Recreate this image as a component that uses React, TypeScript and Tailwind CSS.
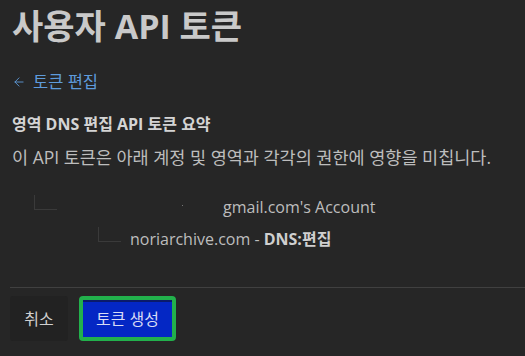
import { ArrowLeft } from "lucide-react";

const font = { fontFamily: '"Open Sans", "Noto Sans CJK KR", sans-serif' };

function TreeLine() {
  return <div className="h-[15px] w-[23px] shrink-0 border-b border-l border-[#3a3a3a]" />;
}

export default function App() {
  return (
    <div className="flex h-[356px] w-[525px] flex-col overflow-hidden bg-[#262626] text-[#c8c8c8]" style={font}>
      <div className="px-3 pt-[4px]">
        <h1 className="text-[34px] font-bold leading-[44px] text-[#c9c9c9]">사용자 API 토큰</h1>

        <a href="#" className="mt-[24px] flex items-center gap-[7px] text-[16.5px] leading-5 text-[#5e9bdc]">
          <ArrowLeft className="h-[14px] w-[14px]" strokeWidth={1.5} />
          토큰 편집
        </a>

        <h2 className="mt-[20px] text-[16px] font-bold leading-6 text-[#d4d4d4]">영역 DNS 편집 API 토큰 요약</h2>
        <p className="mt-[9px] text-[17.5px] leading-6 text-[#bdbdbd]">
          이 API 토큰은 아래 계정 및 영역과 각각의 권한에 영향을 미칩니다.
        </p>

        <div className="mt-[21px] flex flex-col">
          <div className="flex items-end pl-[22px]">
            <TreeLine />
            <span className="ml-[125px] mb-[4px] h-px w-px bg-[#777]" />
            <span className="ml-[40px] translate-y-[7px] text-[16px] leading-5 text-[#bdbdbd]">gmail.com's Account</span>
          </div>
          <div className="mt-[12px] flex items-end pl-[86px]">
            <TreeLine />
            <span className="ml-[9px] translate-y-[7px] text-[16px] leading-5 text-[#bdbdbd]">
              noriarchive.com - <b className="font-bold text-[#cfcfcf]">DNS:</b>
              <b className="font-bold text-[#cfcfcf]">편집</b>
            </span>
          </div>
        </div>
      </div>

      <div className="mt-auto ml-[10px] border-t border-[#404040] pb-[15px] pt-[8px]">
        <div className="flex items-center gap-[11px]">
          <button className="h-[45px] w-[58px] rounded-[3px] bg-[#222222] text-[16px] text-[#d0d0d0]">취소</button>
          <button className="h-[45px] rounded-[4px] border-[4px] border-[#22b14c] bg-[#0427c4] px-[13px] text-[16px] text-[#d8dcf5] shadow-[inset_0_2px_0_#0b1a6a]">
            토큰 생성
          </button>
        </div>
      </div>
    </div>
  );
}
